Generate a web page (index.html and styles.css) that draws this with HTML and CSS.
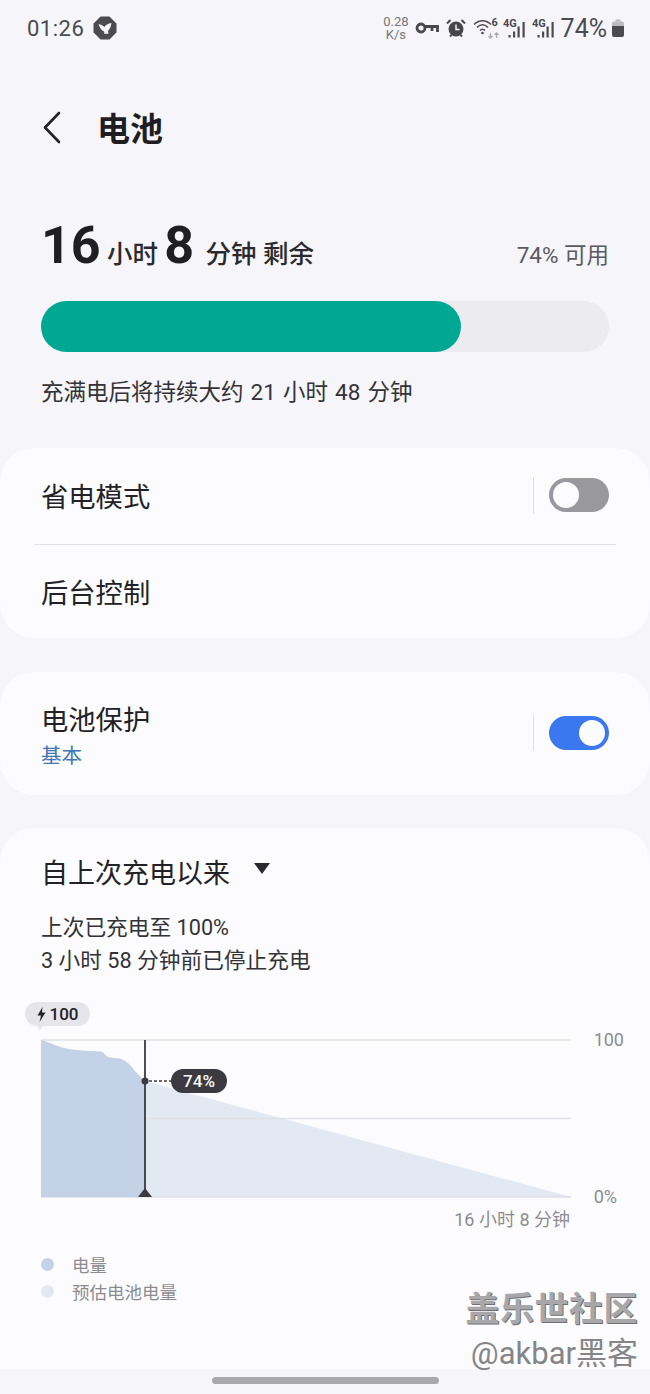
FILE: index.html
```html
<!DOCTYPE html>
<html lang="zh">

<head>
  <meta charset="utf-8">
  <title>电池</title>
  <link rel="stylesheet" href="styles.css">
</head>

<body>
  <div class="screen">

    <div class="statusbar">
      <div class="status-left">
        <span class="clock">01:26</span>
        <svg class="shield" width="24" height="24" viewBox="0 0 24 24">
          <path d="M8 1.500H16L22.500 8V16L16 22.500H8L1.500 16V8Z" fill="#4b4b50" stroke="#4b4b50" stroke-linejoin="round" stroke-width="2"/>
          <path d="M5.500 8C8 8.500 10 9.500 11.500 11C12.500 9 15 7.500 18.500 7C18 10 17 13 15 15L15.500 18C14 17.500 12.500 17.500 11 18C11.500 17 11.500 16 11 15.500C8.500 14.500 6.500 11.500 5.500 8Z" fill="#f5f5fa"/>
        </svg>
      </div>
      <div class="status-right">
        <div class="speed">0.28<br>K/s</div>
        <svg class="icon-key" width="24" height="14" viewBox="0 0 24 14" fill="none" stroke="#47474b" stroke-width="2.800">
          <circle cx="6" cy="7" r="4"/>
          <path d="M10 5.500H22.500V11M17 5.500V10"/>
        </svg>
        <svg class="icon-alarm" width="20" height="20" viewBox="0 0 20 20">
          <circle cx="10" cy="11" r="7.500" fill="#47474b"/>
          <path d="M10 6.500V11.500H13.500" fill="none" stroke="#f5f5fa" stroke-width="1.500"/>
          <path d="M1 5.500L4.500 2M19 5.500L15.500 2M4 18.500L5.500 17M16 18.500L14.500 17" fill="none" stroke="#47474b" stroke-width="2"/>
        </svg>
        <svg class="icon-wifi" width="28" height="24" viewBox="0 0 28 24" fill="none" stroke="#4b4b50" stroke-width="1.600">
          <path d="M1 8.500C6 3.500 13 3.500 18 8.500M4 11.500C7.500 8 11.500 8 15 11.500M7 14.500C8.500 13 10.500 13 12 14.500"/>
          <circle cx="9.500" cy="17" r="1.300" fill="#4b4b50" stroke="none"/>
          <path d="M17.500 17V22M15.500 20L17.500 22L19.500 20M23.500 22V17M21.500 19L23.500 17L25.500 19" stroke="#a9a9ae" stroke-width="1.300"/>
          <text class="wifi-six" x="18.500" y="10">6</text>
        </svg>
        <svg width="25" height="24" viewBox="0 0 25 24">
          <text class="net-type" x="0" y="11">4G</text>
          <path d="M5.500 19h2.200v2.500h-2.200zM10 15.500h2.200v6h-2.200zM14.500 10.500h2.200v11h-2.200zM19.500 6h2.200v15.500h-2.200z" fill="#4b4b50"/>
        </svg>
        <svg width="25" height="24" viewBox="0 0 25 24">
          <text class="net-type" x="0" y="11">4G</text>
          <path d="M5.500 19h2.200v2.500h-2.200zM10 15.500h2.200v6h-2.200zM14.500 10.500h2.200v11h-2.200zM19.500 6h2.200v15.500h-2.200z" fill="#4b4b50"/>
        </svg>
        <span class="status-pct">74%</span>
        <svg class="batt" width="14" height="20" viewBox="0 0 14 20">
          <path d="M4.500 1.500H9.500V3.500H4.500Z" fill="#bcbcc0"/>
          <path d="M1 5.500Q1 3.500 3 3.500H11Q13 3.500 13 5.500V8H1Z" fill="#bcbcc0"/>
          <path d="M1 8H13V17Q13 19 11 19H3Q1 19 1 17Z" fill="#4b4b50"/>
        </svg>
      </div>
    </div>

    <div class="titlebar">
      <svg class="back" width="20" height="34" viewBox="0 0 20 34" fill="none" stroke="#222226" stroke-width="2.600" stroke-linecap="round" stroke-linejoin="round">
        <path d="M17 2L3 16.500L17 31"/>
      </svg>
      <h1 class="page-title">电池</h1>
    </div>

    <section class="summary">
      <div class="remain-row">
        <div class="remain">
          <b>16</b> 小时 <b class="remain-min">8</b> 分钟 <span class="remain-word">剩余</span>
        </div>
        <div class="avail">74% 可用</div>
      </div>
      <div class="bar"><div class="bar-fill" style="width: 74%"></div></div>
      <p class="full-note">充满电后将持续大约 21 小时 48 分钟</p>
    </section>

    <section class="card card-modes">
      <div class="row row-saver">
        <span class="row-name">省电模式</span>
        <div class="row-switch">
          <span class="divider"></span>
          <span class="toggle"><span class="knob"></span></span>
        </div>
      </div>
      <div class="row-line"></div>
      <div class="row row-bg">
        <span class="row-name">后台控制</span>
      </div>
    </section>

    <section class="card card-protect">
      <div class="row">
        <div>
          <div class="row-name">电池保护</div>
          <div class="row-sub">基本</div>
        </div>
        <div class="row-switch">
          <span class="divider"></span>
          <span class="toggle toggle-on"><span class="knob"></span></span>
        </div>
      </div>
    </section>

    <section class="card card-usage">
      <div class="usage-head">
        <span class="usage-title">自上次充电以来</span>
        <span class="caret"></span>
      </div>
      <p class="usage-note">上次已充电至 100%<br>3 小时 58 分钟前已停止充电</p>

      <div class="chart">
        <svg class="chart-svg" width="650" height="220" viewBox="0 0 650 220">
          <path d="M145 81L571 197H145Z" fill="#e3e9f2"/>
          <path d="M41 40H571M146 118.500H571M41 197H571" stroke="#e0e1e7" stroke-width="1.500" fill="none"/>
          <path d="M41 40C46 41 50 43 55 45C60 47 66 48.500 72 49.500C80 50.500 92 51 101 51.500C104 52.500 105 55 108 57C112 58 116 58 120 58.500C125 60 128 63 131 66C135 71 140 77 145 81V197H41Z" fill="#c3d2e6"/>
          <path d="M145 40V190" stroke="#3a3a40" stroke-width="1.800"/>
          <path d="M145 188L152 197H138Z" fill="#3a3a40"/>
          <circle cx="145" cy="81" r="3.500" fill="#3a3a40"/>
          <path d="M149 81H171" stroke="#3a3a40" stroke-width="1.500" stroke-dasharray="3 2"/>
        </svg>
        <div class="charge-tag"><svg width="9" height="15" viewBox="0 0 9 15"><path d="M5.500 0L0.500 8.500H4L2.500 15L8.500 5.500H5Z" fill="#222226"/></svg>100</div>
        <div class="now-tag">74%</div>
        <span class="axis axis-top">100</span>
        <span class="axis axis-bottom">0%</span>
        <span class="axis axis-time">16 小时 8 分钟</span>
      </div>

      <ul class="legend">
        <li><span class="dot dot-used"></span>电量</li>
        <li><span class="dot dot-est"></span>预估电池电量</li>
      </ul>
    </section>

    <div class="navbar"><span class="handle"></span></div>

    <div class="watermark">
      <div class="wm-top">盖乐世社区</div>
      <div class="wm-bottom">@akbar黑客</div>
    </div>
  </div>
</body>

</html>
```

FILE: styles.css
```css
* {
  box-sizing: border-box;
}

body {
  margin: 0;
  background-color: #f5f5fa;
  font-family: "Roboto", "Noto Sans CJK SC", sans-serif;
  color: #26262a;
}

.screen {
  position: relative;
  width: 650px;
  height: 1394px;
  overflow: hidden;
}

/* status bar */
.statusbar {
  height: 56px;
  padding: 0 25px 0 27px;
  display: flex;
  justify-content: space-between;
  align-items: center;
}

.status-left {
  display: flex;
  align-items: center;
  gap: 9px;
}

.clock {
  font-size: 22px;
  color: #4b4b50;
  letter-spacing: 0.5px;
}

.status-right {
  display: flex;
  align-items: center;
  gap: 4px;
}

.speed {
  font-size: 13px;
  line-height: 13px;
  text-align: center;
  color: #77777c;
  margin-right: 2px;
}

.icon-alarm,
.icon-wifi {
  margin-left: 3px;
}

.icon-wifi {
  margin-right: -2px;
}

.net-type {
  font-size: 11px;
  font-weight: 700;
  fill: #4b4b50;
}

.wifi-six {
  font-size: 11px;
  font-weight: 700;
  fill: #4b4b50;
  stroke: none;
}

.status-pct {
  font-size: 25px;
  color: #4b4b50;
}

/* title */
.titlebar {
  height: 50px;
  margin-top: 47px;
  padding-left: 42px;
  display: flex;
  align-items: center;
  gap: 35px;
}

.page-title {
  margin: 0 0 3px;
  font-size: 33px;
  font-weight: 700;
  color: #1e1e22;
}

/* remaining time */
.summary {
  padding: 47px 41px 0;
  height: 295px;
}

.remain-row {
  height: 76px;
  padding-top: 15px;
  display: flex;
  justify-content: space-between;
  align-items: baseline;
}

.remain {
  font-size: 25.500px;
  font-weight: 500;
  color: #2a2a2e;
}

.remain b {
  font-size: 52px;
  font-weight: 700;
  color: #1f1f23;
}

.remain .remain-min {
  margin-right: 5px;
}

.avail {
  font-size: 22.500px;
  color: #5a5a5f;
}

.bar {
  height: 51px;
  margin-top: 25px;
  border-radius: 26px;
  background-color: #ebebf0;
}

.bar-fill {
  height: 100%;
  border-radius: 26px;
  background-color: #00a893;
}

.full-note {
  margin: 24px 0 0;
  font-size: 22.500px;
  line-height: 32px;
  word-spacing: 1.500px;
  color: #333337;
}

/* cards */
.card {
  background-color: #fcfcff;
  border-radius: 34px;
}

.card-modes {
  height: 190px;
}

.row {
  display: flex;
  justify-content: space-between;
  align-items: center;
  padding: 0 41px;
}

.row-saver {
  height: 96px;
}

.row-saver .row-name {
  padding-top: 4px;
}

.row-saver .row-switch {
  margin-bottom: 2px;
}

.row-bg {
  height: 93px;
  padding-top: 4px;
}

.row-line {
  height: 1px;
  margin: 0 34px;
  background-color: #e3e3e8;
}

.row-name {
  font-size: 27.300px;
  line-height: 36px;
  color: #222226;
}

.row-sub {
  margin-top: 4px;
  font-size: 20.500px;
  line-height: 26px;
  color: #3f74b5;
}

.row-switch {
  display: flex;
  align-items: center;
  gap: 15px;
}

.divider {
  width: 1.500px;
  height: 37px;
  background-color: #dfdfe4;
}

.toggle {
  width: 60px;
  height: 34px;
  padding: 4px;
  border-radius: 17px;
  background-color: #98989d;
  display: flex;
}

.knob {
  width: 26px;
  height: 26px;
  border-radius: 50%;
  background-color: #fcfcff;
}

.toggle-on {
  background-color: #3b78f0;
  justify-content: flex-end;
}

.card-protect {
  height: 123px;
  margin-top: 34px;
  padding-top: 4px;
  display: flex;
  flex-direction: column;
  justify-content: center;
}

.card-protect .row-switch {
  margin-bottom: 6px;
}

/* usage chart */
.card-usage {
  height: 600px;
  margin-top: 33px;
  padding-top: 25px;
}

.usage-head {
  height: 36px;
  padding-left: 41px;
  display: flex;
  align-items: center;
  gap: 24px;
}

.usage-title {
  font-size: 27px;
  color: #222226;
}

.caret {
  width: 0;
  height: 0;
  border-left: 8.500px solid transparent;
  border-right: 8.500px solid transparent;
  border-top: 11px solid #2a2a2e;
  margin-bottom: 6px;
}

.usage-note {
  margin: 22px 0 0;
  padding-left: 41px;
  font-size: 21.700px;
  line-height: 33px;
  color: #333337;
}

.chart {
  position: relative;
  height: 220px;
  margin-top: 23px;
}

.chart-svg {
  display: block;
}

.charge-tag {
  position: absolute;
  left: 25px;
  top: 2px;
  width: 65px;
  height: 24px;
  border-radius: 12px;
  background-color: #e6e6ea;
  display: flex;
  align-items: center;
  justify-content: center;
  gap: 4px;
  font-size: 17px;
  font-weight: 500;
  color: #222226;
}

.charge-tag::after {
  content: "";
  position: absolute;
  left: 12px;
  top: 23px;
  border-left: 3px solid transparent;
  border-right: 3px solid transparent;
  border-top: 6px solid #e6e6ea;
}

.now-tag {
  position: absolute;
  left: 171px;
  top: 69px;
  width: 56px;
  height: 24px;
  border-radius: 12px;
  background-color: #3a3a40;
  color: #fafafc;
  font-size: 17px;
  font-weight: 500;
  line-height: 24px;
  text-align: center;
}

.axis {
  position: absolute;
  font-size: 18px;
  line-height: 22px;
  color: #8c8c91;
}

.axis-top {
  right: 26px;
  top: 29px;
}

.axis-bottom {
  right: 33px;
  top: 186px;
}

.axis-time {
  right: 80px;
  top: 209px;
}

.legend {
  list-style: none;
  margin: 31px 0 0;
  padding: 0 0 0 41px;
}

.legend li {
  display: flex;
  align-items: center;
  height: 27px;
  font-size: 17.500px;
  color: #8c8c91;
}

.dot {
  width: 13px;
  height: 13px;
  margin-right: 18px;
  border-radius: 50%;
}

.dot-used {
  background-color: #c3d2e6;
}

.dot-est {
  background-color: #e3e9f2;
}

/* bottom bar sits over the end of the card */
.navbar {
  position: absolute;
  left: 0;
  right: 0;
  bottom: 0;
  height: 25px;
  background-color: #f6f6f9;
  display: flex;
  justify-content: center;
  padding-top: 8px;
}

.handle {
  width: 227px;
  height: 7px;
  border-radius: 4px;
  background-color: #a9a9ab;
}

.watermark {
  position: absolute;
  right: 12px;
  top: 1288px;
  text-align: right;
}

.wm-top {
  font-size: 34px;
  line-height: 42px;
  font-weight: 700;
  letter-spacing: 0.5px;
  color: #a8a8ab;
  text-shadow: 1px 1px 0 #6f6f72;
}

.wm-bottom {
  margin-top: 6px;
  font-size: 31px;
  line-height: 36px;
  color: #858588;
}
```
